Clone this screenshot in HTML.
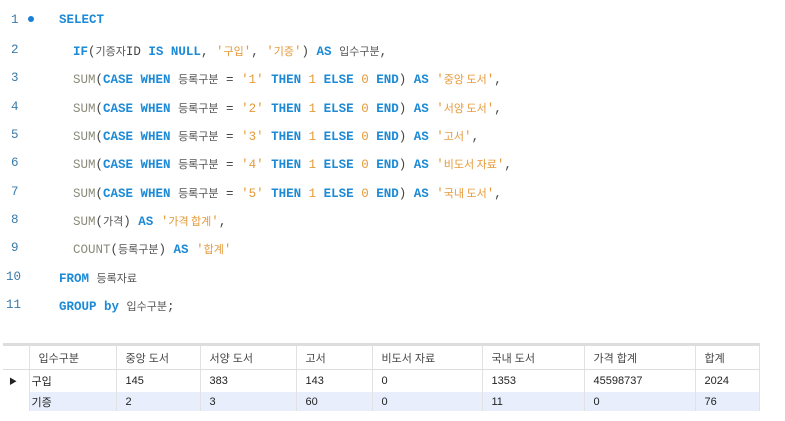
<!DOCTYPE html>
<html><head><meta charset="utf-8"><style>
body{margin:0;width:785px;height:421px;background:#fff;overflow:hidden;position:relative;font-family:"Liberation Mono","Noto Sans CJK KR",monospace;}
.ln{position:absolute;left:11px;width:18px;text-align:left;font-size:12.5px;color:#3a7aa8;}
.c{position:absolute;left:73px;font-size:12.5px;white-space:pre;color:#444;}
.k{color:#1c8ad6;font-weight:bold}.f{color:#8a8a7a}.s{color:#e59a3a}.n{color:#e59a3a}
.h{font-family:"Noto Sans CJK KR",sans-serif;font-size:11px;color:#555}
.dot{position:absolute;left:28px;top:16px;width:6px;height:6px;border-radius:50%;background:#1a7fd8}
table{position:absolute;left:3px;top:343px;border-collapse:collapse;font-family:"Liberation Sans","Noto Sans CJK KR",sans-serif;font-size:11px;color:#222}
td{padding:0 0 0 9px;height:22px;border-right:1px solid #e2e2e2}
tr.hd td{background:#fff;border-bottom:1px solid #ddd;height:23px;color:#444}
table{border-top:3px solid #ddd}
tr.r2 td{background:#e8eefb;height:19px}
</style></head><body>
<div class="dot"></div>
<div class="ln" style="top:13px">1</div>
<div class="ln" style="top:43px">2</div>
<div class="ln" style="top:71px">3</div>
<div class="ln" style="top:100px">4</div>
<div class="ln" style="top:128px">5</div>
<div class="ln" style="top:156px">6</div>
<div class="ln" style="top:185px">7</div>
<div class="ln" style="top:213px">8</div>
<div class="ln" style="top:241px">9</div>
<div class="ln" style="top:270px;left:6px">10</div>
<div class="ln" style="top:298px;left:6px">11</div>
<div class="c" style="top:13px;left:59px"><span class="k">SELECT</span></div>
<div class="c" style="top:43px"><span class="k">IF</span>(<span class="h">기증자</span>ID <span class="k">IS NULL</span>, <span class="s">'<span class="h" style="color:#e59a3a">구입</span>'</span>, <span class="s">'<span class="h" style="color:#e59a3a">기증</span>'</span>) <span class="k">AS</span> <span class="h">입수구분</span>,</div>
<div class="c" style="top:71px"><span class="f">SUM</span>(<span class="k">CASE WHEN</span> <span class="h">등록구분</span> = <span class="s">'1'</span> <span class="k">THEN</span> <span class="n">1</span> <span class="k">ELSE</span> <span class="n">0</span> <span class="k">END</span>) <span class="k">AS</span> <span class="s">'<span class="h" style="color:#e59a3a">중앙 도서</span>'</span>,</div>
<div class="c" style="top:100px"><span class="f">SUM</span>(<span class="k">CASE WHEN</span> <span class="h">등록구분</span> = <span class="s">'2'</span> <span class="k">THEN</span> <span class="n">1</span> <span class="k">ELSE</span> <span class="n">0</span> <span class="k">END</span>) <span class="k">AS</span> <span class="s">'<span class="h" style="color:#e59a3a">서양 도서</span>'</span>,</div>
<div class="c" style="top:128px"><span class="f">SUM</span>(<span class="k">CASE WHEN</span> <span class="h">등록구분</span> = <span class="s">'3'</span> <span class="k">THEN</span> <span class="n">1</span> <span class="k">ELSE</span> <span class="n">0</span> <span class="k">END</span>) <span class="k">AS</span> <span class="s">'<span class="h" style="color:#e59a3a">고서</span>'</span>,</div>
<div class="c" style="top:156px"><span class="f">SUM</span>(<span class="k">CASE WHEN</span> <span class="h">등록구분</span> = <span class="s">'4'</span> <span class="k">THEN</span> <span class="n">1</span> <span class="k">ELSE</span> <span class="n">0</span> <span class="k">END</span>) <span class="k">AS</span> <span class="s">'<span class="h" style="color:#e59a3a">비도서 자료</span>'</span>,</div>
<div class="c" style="top:185px"><span class="f">SUM</span>(<span class="k">CASE WHEN</span> <span class="h">등록구분</span> = <span class="s">'5'</span> <span class="k">THEN</span> <span class="n">1</span> <span class="k">ELSE</span> <span class="n">0</span> <span class="k">END</span>) <span class="k">AS</span> <span class="s">'<span class="h" style="color:#e59a3a">국내 도서</span>'</span>,</div>
<div class="c" style="top:213px"><span class="f">SUM</span>(<span class="h">가격</span>) <span class="k">AS</span> <span class="s">'<span class="h" style="color:#e59a3a">가격 합계</span>'</span>,</div>
<div class="c" style="top:241px"><span class="f">COUNT</span>(<span class="h">등록구분</span>) <span class="k">AS</span> <span class="s">'<span class="h" style="color:#e59a3a">합계</span>'</span></div>
<div class="c" style="top:270px;left:59px"><span class="k">FROM</span> <span class="h">등록자료</span></div>
<div class="c" style="top:298px;left:59px"><span class="k">GROUP by</span> <span class="h">입수구분</span>;</div>
<table>
<colgroup><col style="width:26px"><col style="width:87px"><col style="width:84px"><col style="width:96px"><col style="width:76px"><col style="width:110px"><col style="width:102px"><col style="width:111px"><col style="width:64px"></colgroup>
<tr class="hd"><td></td><td>입수구분</td><td>중앙 도서</td><td>서양 도서</td><td>고서</td><td>비도서 자료</td><td>국내 도서</td><td>가격 합계</td><td>합계</td></tr>
<tr><td style="font-size:8px;padding-left:6px">▶</td><td style="padding-left:2px">구입</td><td>145</td><td>383</td><td>143</td><td>0</td><td>1353</td><td>45598737</td><td>2024</td></tr>
<tr class="r2"><td style="background:#fff"></td><td style="padding-left:2px">기증</td><td>2</td><td>3</td><td>60</td><td>0</td><td>11</td><td>0</td><td>76</td></tr>
</table>
</body></html>
